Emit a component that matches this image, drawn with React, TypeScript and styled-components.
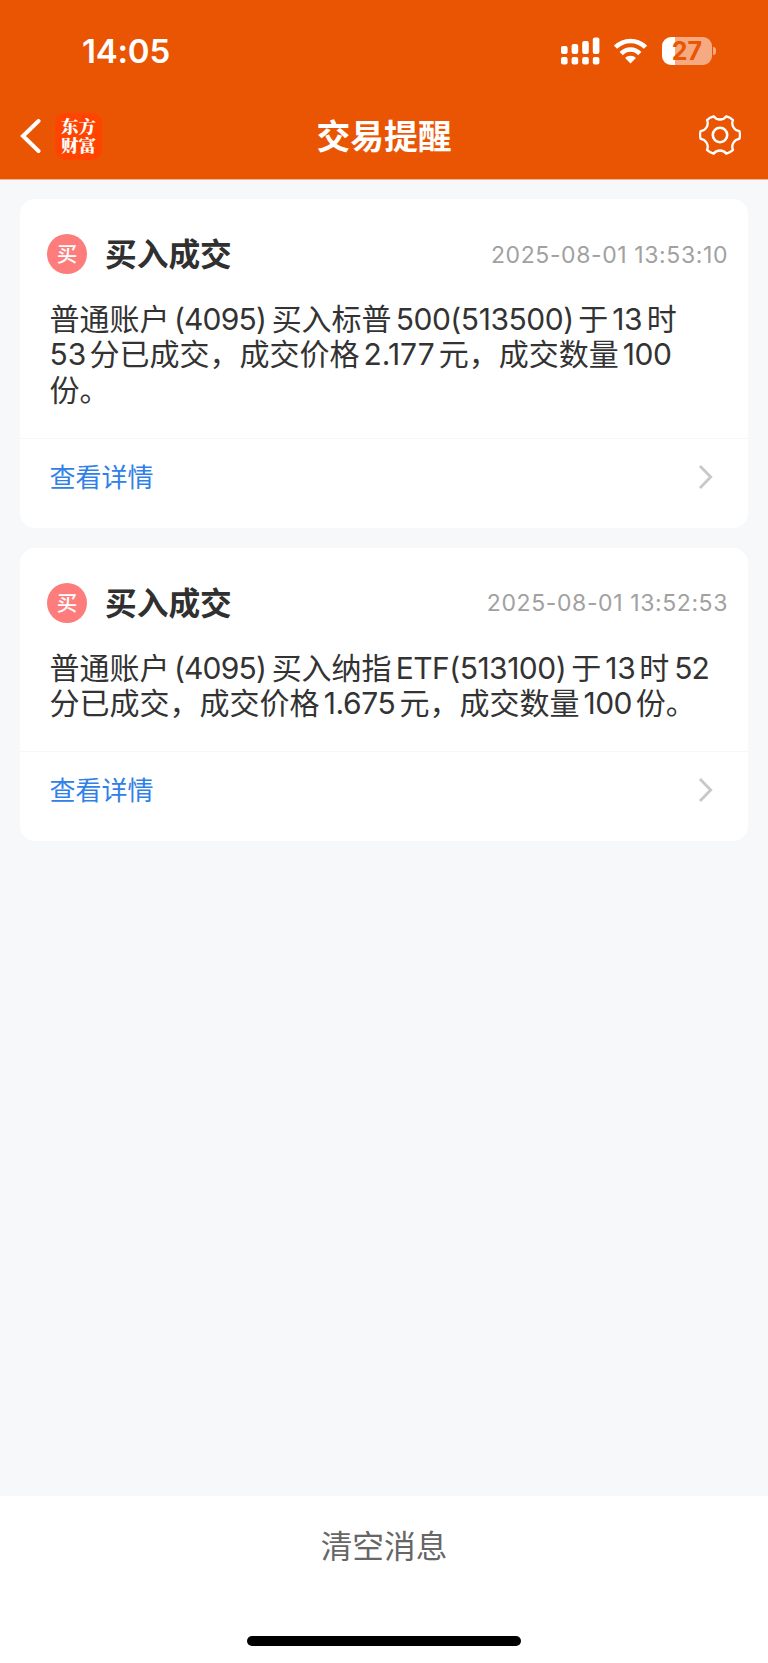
import React from 'react';
import styled, { createGlobalStyle } from 'styled-components';

const Global = createGlobalStyle`
  * { box-sizing: border-box; }
  body { margin: 0; background: #f7f8fa; font-family: Inter, "Noto Sans CJK SC", sans-serif; }
`;
const Page = styled.div`
  width: 768px;
  height: 1663px;
  display: flex;
  flex-direction: column;
  background: #f7f8fa;
`;
const Header = styled.header`
  height: 180px;
  background: #ea5504;
  border-bottom: 1px solid #f3b693;
  color: #fff;
  flex: none;
`;
const StatusBar = styled.div`
  height: 102px;
  padding: 0 52px 0 82px;
  display: flex;
  align-items: center;
  justify-content: space-between;
`;
const Clock = styled.span`
  font-size: 33px;
  font-weight: 600;
  line-height: 40px;
  letter-spacing: -0.2px;
`;
const StatusIcons = styled.div`
  display: flex;
  align-items: center;
  gap: 14px;
`;
const BatteryGroup = styled.div`
  display: flex;
  align-items: center;
  gap: 1px;
  margin-left: 1px;
`;
const Battery = styled.div`
  width: 50px;
  height: 28px;
  border-radius: 9px;
  background: linear-gradient(90deg, #fff 0 13px, #f5aa82 13px);
  color: #ea5504;
  font-size: 25px;
  font-weight: 700;
  line-height: 28px;
  text-align: center;
`;
const BatteryTip = styled.div`
  width: 3px;
  height: 8px;
  border-radius: 0 4px 4px 0;
  background: #f5aa82;
`;
const NavBar = styled.nav`
  height: 68px;
  padding: 0 20px;
  display: grid;
  grid-template-columns: 1fr auto 1fr;
  align-items: center;
`;
const NavLeft = styled.div`
  display: flex;
  align-items: center;
  gap: 14px;
`;
const Logo = styled.div`
  width: 47px;
  height: 47px;
  padding: 3px 5px 0;
  border-radius: 10px;
  background: #ff4400;
  text-align: center;
  font: 900 17.5px/19.5px "Noto Serif CJK SC", "Noto Sans CJK SC", serif;
`;
const PageTitle = styled.h1`
  margin: 2px 0 0;
  font-size: 33.8px;
  line-height: 40px;
  font-weight: 600;
`;
const Settings = styled.div`
  display: flex;
  justify-content: flex-end;
  padding: 0 7px 3px 0;
`;
const List = styled.main`
  flex: 1;
  padding: 19px 20px 0;
  display: flex;
  flex-direction: column;
  gap: 20px;
`;
const Card = styled.article`
  background: #fff;
  border-radius: 15px;
`;
const CardHead = styled.div`
  display: flex;
  align-items: center;
  height: 110px;
  padding: 0 20px 0 27px;
`;
const Badge = styled.span`
  width: 40px;
  height: 40px;
  border-radius: 50%;
  background: #fd7c7c;
  color: #fff;
  font-size: 20.5px;
  font-weight: 500;
  line-height: 41px;
  text-align: center;
`;
const CardTitle = styled.h2`
  margin: 2px 0 0 18px;
  flex: 1;
  font-size: 31.7px;
  line-height: 40px;
  font-weight: 600;
  color: #303030;
`;
const Time = styled.time`
  margin-top: 1px;
  font-size: 23px;
  letter-spacing: 0.6px;
  color: #a1a1a1;
`;
const Message = styled.div`
  padding: 0 29px 30px 29.4px;
  margin-top: -7px;
  font-size: 30px;
  line-height: 35.3px;
  color: #333;
`;
const Line = styled.div`
  white-space: pre;
  height: 35.3px;
`;
const Latin = styled.span<{ $before: number; $after: number; $track: number }>`
  margin-left: ${(p) => p.$before}px;
  margin-right: ${(p) => p.$after}px;
  letter-spacing: ${(p) => p.$track}px;
`;
const Detail = styled.a`
  display: flex;
  align-items: center;
  justify-content: space-between;
  height: 90px;
  padding: 0 35px 16px 29.5px;
  border-top: 1px solid #f7f7f8;
  font-size: 26px;
  color: #2f80e8;

  svg {
    margin-top: 3px;
  }
`;
const Footer = styled.footer`
  height: 167px;
  background: #fff;
  display: flex;
  flex-direction: column;
  align-items: center;
  justify-content: space-between;
  padding: 31px 0 17px;
`;
const Clear = styled.button`
  border: 0;
  padding: 0;
  background: none;
  font: 400 31.7px/40px Inter, "Noto Sans CJK SC", sans-serif;
  color: #666;
`;
const HomeIndicator = styled.div`
  width: 274px;
  height: 10px;
  border-radius: 5px;
  background: #000;
`;

/* A plain string is Chinese text; a tuple is [text, space before, space after, tracking]. */
type Run = string | [string, number, number, number];
const messages: { time: string; lines: Run[][] }[] = [
  {
    time: '2025-08-01 13:53:10',
    lines: [
      ['普通账户', ['(4095)', 4.5, 5.5, -0.8], '买入标普', ['500(513500)', 4, 4.5, -0.45], '于', ['13', 4, 4.5, -0.4], '时'],
      [['53', 0, 3.4, 0], '分已成交，成交价格', ['2.177', 4, 4, 0], '元，成交数量', ['100', 4, 0, -0.4]],
      ['份。'],
    ],
  },
  {
    time: '2025-08-01 13:52:53',
    lines: [
      ['普通账户', ['(4095)', 4.5, 5.5, -0.8], '买入纳指', ['ETF(513100)', 4, 5.2, -0.5], '于', ['13', 4, 4, -0.4], '时', ['52', 5, 0, -1]],
      ['分已成交，成交价格', ['1.675', 4.3, 4.3, -0.4], '元，成交数量', ['100', 4, 4, -0.6], '份。'],
    ],
  },
];

const at = (deg: number, r: number) => {
  const a = (deg * Math.PI) / 180;
  return `${(r * Math.cos(a)).toFixed(2)} ${(r * Math.sin(a)).toFixed(2)}`;
};
const gearPath =
  `M${at(-11, 19.8)}` +
  [0, 60, 120, 180, 240, 300]
    .map((d) => `Q${at(d, 20.4)} ${at(d + 11, 19.8)}C${at(d + 17, 14.8)} ${at(d + 43, 14.8)} ${at(d + 49, 19.8)}`)
    .join('') +
  'Z';

const Gear = () => (
  <svg width="42" height="42" viewBox="-21 -21 42 42" fill="none" stroke="#fff" strokeWidth="2.3" strokeLinejoin="round">
    <path d={gearPath} />
    <circle r="7.2" strokeWidth="2.6" />
  </svg>
);

const Signal = () => (
  <svg width="39" height="28" viewBox="0 0 39 28" fill="#fff">
    {[9, 7, 4, 0.5].map((y, i) => (
      <g key={y}>
        <rect x={i * 10.6} y={y} width="6.6" height={17 - y} rx="2" />
        <rect x={i * 10.6} y="20" width="6.6" height="7.6" rx="2" />
      </g>
    ))}
  </svg>
);

const Wifi = () => (
  <svg width="33" height="26" viewBox="0 0 33 26" fill="none" stroke="#fff" strokeWidth="4.5">
    <path d="M1.5 9.2C10 0.8 23 0.8 31.5 9.2" />
    <path d="M7.2 15.6C12.4 10.2 20.6 10.2 25.8 15.6" />
    <path d="M16.5 25.6 11.1 20C14 17 19 17 21.9 20Z" fill="#fff" stroke="none" />
  </svg>
);

export default function App() {
  return (
    <Page>
      <Global />
      <Header>
        <StatusBar>
          <Clock>14:05</Clock>
          <StatusIcons>
            <Signal />
            <Wifi />
            <BatteryGroup>
              <Battery>27</Battery>
              <BatteryTip />
            </BatteryGroup>
          </StatusIcons>
        </StatusBar>
        <NavBar>
          <NavLeft>
            <svg width="21" height="36" viewBox="0 0 21 36" fill="none" stroke="#fff" strokeWidth="4" strokeLinecap="round">
              <path d="M18.5 3 3 18 18.5 33" />
            </svg>
            <Logo>东方财富</Logo>
          </NavLeft>
          <PageTitle>交易提醒</PageTitle>
          <Settings><Gear /></Settings>
        </NavBar>
      </Header>
      <List>
        {messages.map((m) => (
          <Card key={m.time}>
            <CardHead>
              <Badge>买</Badge>
              <CardTitle>买入成交</CardTitle>
              <Time>{m.time}</Time>
            </CardHead>
            <Message>
              {m.lines.map((line, i) => (
                <Line key={i}>
                  {line.map((r, j) =>
                    typeof r === 'string' ? r : (
                      <Latin key={j} $before={r[1]} $after={r[2]} $track={r[3]}>{r[0]}</Latin>
                    ),
                  )}
                </Line>
              ))}
            </Message>
            <Detail>
              查看详情
              <svg width="15" height="26" viewBox="0 0 15 26" fill="none" stroke="#c8c8c8" strokeWidth="2.8">
                <path d="M2 2 12.7 13 2 24" />
              </svg>
            </Detail>
          </Card>
        ))}
      </List>
      <Footer>
        <Clear>清空消息</Clear>
        <HomeIndicator />
      </Footer>
    </Page>
  );
}
